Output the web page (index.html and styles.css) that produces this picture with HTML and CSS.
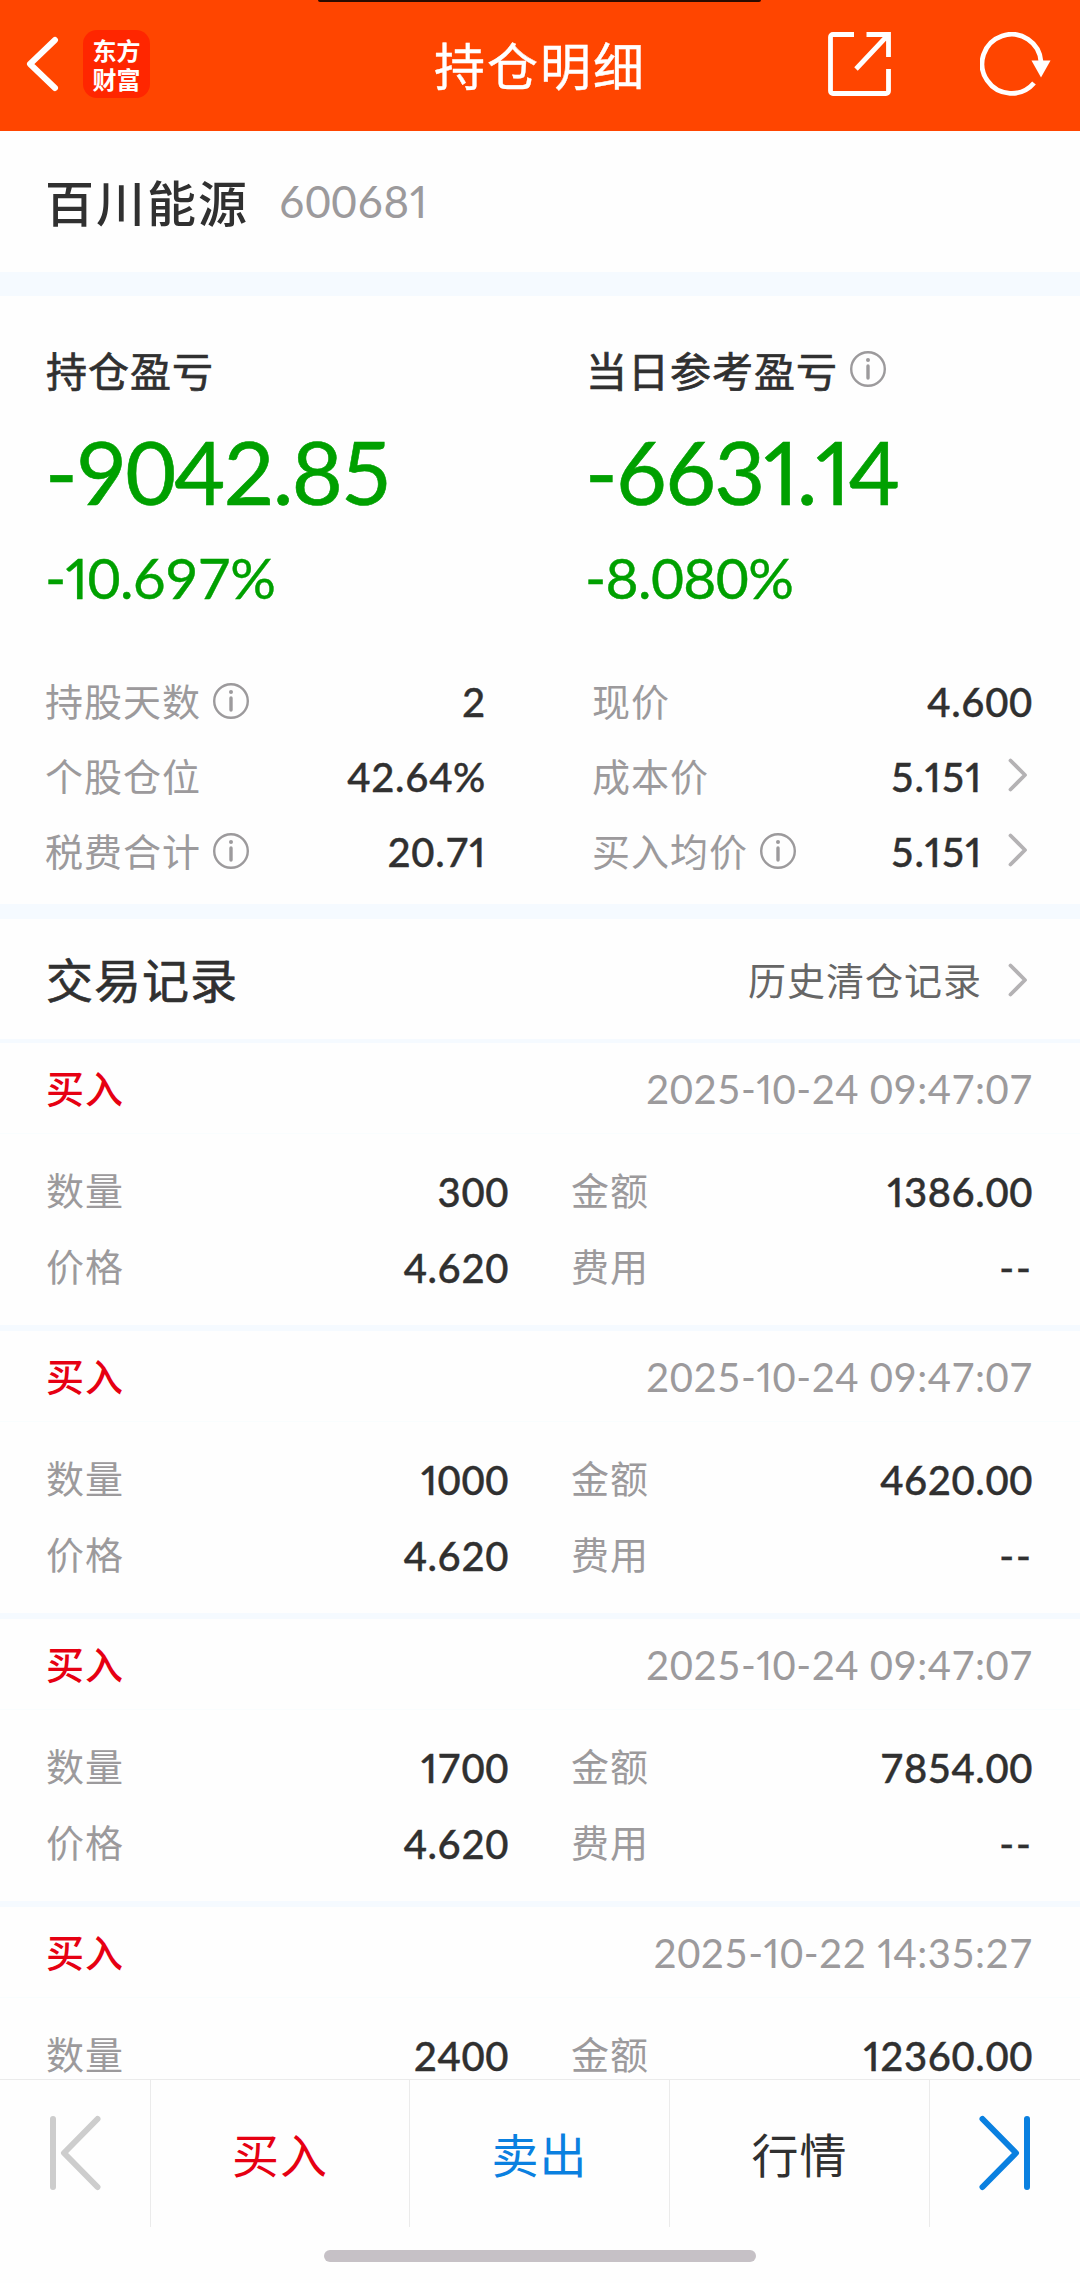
FILE: index.html
```html
<!DOCTYPE html>
<html lang="zh-CN">
<head>
<meta charset="utf-8">
<title>持仓明细</title>
<link rel="stylesheet" href="styles.css">
</head>
<body>
<svg width="0" height="0" class="defs" aria-hidden="true">
  <symbol id="info" viewBox="0 0 36 36"><circle cx="18" cy="18" r="16.8" fill="none" stroke="#9c9a9c" stroke-width="2.4"/><circle cx="18" cy="9" r="2" fill="#9c9a9c"/><path d="M18 15v12" stroke="#9c9a9c" stroke-width="3.4" stroke-linecap="round"/></symbol>
  <symbol id="chevron" viewBox="0 0 20 34"><path d="M2.500 2.500 17 17 2.500 31.500" fill="none" stroke="#b4b2b4" stroke-width="3.800" stroke-linecap="round" stroke-linejoin="round"/></symbol>
</svg>
<div class="screen">
  <header class="topbar">
    <div class="cutout"></div>
    <div class="topbar-left">
      <svg class="back" viewBox="0 0 34 56"><path d="M30 4 5 28 30 52" fill="none" stroke="#fff" stroke-width="6" stroke-linecap="round" stroke-linejoin="round"/></svg>
      <div class="logo"><span>东方</span><span>财富</span></div>
    </div>
    <h1>持仓明细</h1>
    <div class="topbar-right">
      <svg class="share" viewBox="0 0 64 64"><path d="M26 2.500H5a2.500 2.500 0 0 0-2.500 2.500V59a2.500 2.500 0 0 0 2.500 2.500H58a2.500 2.500 0 0 0 2.500-2.500V37M38.500 2.500H60.500V25M60 3 28 37" fill="none" stroke="#fff" stroke-width="4.800"/></svg>
      <svg class="refresh" viewBox="0 0 74 64"><path d="M54 51A29.500 29.500 0 1 1 61 30" fill="none" stroke="#fff" stroke-width="4.800"/><path d="M51.500 28.500H70.500L61 45.500Z" fill="#fff"/></svg>
    </div>
  </header>

  <section class="stock"><h2>百川能源</h2><span class="code num">60068<i>1</i></span></section>

  <section class="summary">
    <div class="totals">
      <div class="total"><div class="total-title">持仓盈亏</div><div class="amount num">-9042.85</div><div class="rate num">-<i>1</i>0.697%</div></div>
      <div class="total"><div class="total-title">当日参考盈亏<svg class="info"><use href="#info"/></svg></div><div class="amount num">-663<i>1</i>.<i>1</i>4</div><div class="rate num">-8.080%</div></div>
    </div>
    <div class="details">
      <dl>
        <div><dt><span>持股天数</span><svg class="info"><use href="#info"/></svg></dt><dd class="num">2</dd></div>
        <div><dt><span>个股仓位</span></dt><dd class="num">42.64%</dd></div>
        <div><dt><span>税费合计</span><svg class="info"><use href="#info"/></svg></dt><dd class="num"><span>20.7<i>1</i></span></dd></div>
      </dl>
      <dl>
        <div><dt><span>现价</span></dt><dd class="num">4.600</dd></div>
        <div><dt><span>成本价</span></dt><dd class="num"><span>5.<i>1</i>5<i>1</i></span><svg class="chevron"><use href="#chevron"/></svg></dd></div>
        <div><dt><span>买入均价</span><svg class="info"><use href="#info"/></svg></dt><dd class="num"><span>5.<i>1</i>5<i>1</i></span><svg class="chevron"><use href="#chevron"/></svg></dd></div>
      </dl>
    </div>
  </section>

  <section class="records-head"><h3>交易记录</h3><a class="history">历史清仓记录<svg class="chevron"><use href="#chevron"/></svg></a></section>

  <main class="records">
    <article class="record">
      <div class="record-head"><b>买入</b><time class="num">2025-<i>1</i>0-24 09:47:07</time></div>
      <div class="grid"><span>数量</span><em class="num">300</em><span>金额</span><em class="num"><i>1</i>386.00</em><span>价格</span><em class="num">4.620</em><span>费用</span><em class="num dash">--</em></div>
    </article>
    <article class="record">
      <div class="record-head"><b>买入</b><time class="num">2025-<i>1</i>0-24 09:47:07</time></div>
      <div class="grid"><span>数量</span><em class="num"><i>1</i>000</em><span>金额</span><em class="num">4620.00</em><span>价格</span><em class="num">4.620</em><span>费用</span><em class="num dash">--</em></div>
    </article>
    <article class="record">
      <div class="record-head"><b>买入</b><time class="num">2025-<i>1</i>0-24 09:47:07</time></div>
      <div class="grid"><span>数量</span><em class="num"><i>1</i>700</em><span>金额</span><em class="num">7854.00</em><span>价格</span><em class="num">4.620</em><span>费用</span><em class="num dash">--</em></div>
    </article>
    <article class="record">
      <div class="record-head"><b>买入</b><time class="num">2025-<i>1</i>0-22 <i>1</i>4:35:27</time></div>
      <div class="grid"><span>数量</span><em class="num">2400</em><span>金额</span><em class="num"><i>1</i>2360.00</em></div>
    </article>
  </main>

  <footer>
    <nav>
      <a><svg class="step" viewBox="0 0 54 76"><path d="M5 4V72M49.500 4 16 38 49.500 72" fill="none" stroke="#cdcdcd" stroke-width="6" stroke-linecap="round" stroke-linejoin="round"/></svg></a>
      <a class="buy">买入</a>
      <a class="sell">卖出</a>
      <a>行情</a>
      <a><svg class="step" viewBox="0 0 54 76"><path d="M49 4V72M4.500 4 38 38 4.500 72" fill="none" stroke="#0a80e0" stroke-width="6" stroke-linecap="round" stroke-linejoin="round"/></svg></a>
    </nav>
    <div class="home"></div>
  </footer>
</div>
</body>
</html>
```
FILE: styles.css
```css
* { box-sizing: border-box; margin: 0; padding: 0; }
body { background: #fefefe; color: #303030; font-family: "Noto Sans CJK SC", sans-serif; }
svg { display: block; flex: none; }
.defs { position: absolute; }
.num { font-family: Lato, "Noto Sans CJK SC", sans-serif; font-variant-numeric: tabular-nums; white-space: nowrap; }
.num i { font-style: normal; font-variant-numeric: proportional-nums; }
.screen { width: 1080px; height: 2283px; display: flex; flex-direction: column; overflow: hidden; }
.info { width: 36px; height: 36px; margin-left: 12px; }
.chevron { width: 20px; height: 34px; margin-left: 26px; margin-right: 5px; }

.topbar { position: relative; flex: none; height: 131px; background: #ff4500; color: #fff; display: grid; grid-template-columns: 1fr auto 1fr; align-items: start; }
.cutout { position: absolute; left: 318px; top: 0; width: 443px; height: 2px; background: #2a0b00; border-radius: 0 0 12px 12px; }
.topbar-left { display: flex; align-items: center; padding-left: 25px; gap: 24px; height: 128px; }
.back { width: 34px; height: 56px; }
.logo { width: 67px; height: 68px; border-radius: 14px; background: #ff2600; display: grid; grid-template-rows: 29px 29px; align-content: center; justify-content: center; font-size: 24px; line-height: 29px; font-weight: 700; }
h1 { font-size: 51px; line-height: 74px; letter-spacing: 2px; font-weight: 400; padding-top: 27px; -webkit-text-stroke: .4px #fff; }
.topbar-right { display: flex; justify-content: flex-end; gap: 88px; padding-right: 26px; height: 128px; align-items: center; }
.share { width: 64px; height: 64px; }
.refresh { width: 74px; height: 64px; }

.stock { flex: none; height: 141px; display: flex; align-items: center; padding: 0 46px 1px 45px; gap: 31px; }
h2 { font-size: 49px; line-height: 72px; letter-spacing: 2px; font-weight: 500; }
.code { font-size: 44px; line-height: 60px; color: #9c9a9c; letter-spacing: .6px; margin-left: -1px; }

.summary { flex: none; height: 647px; border-top: 24px solid #f5faff; border-bottom: 15px solid #f5faff; }
.totals { display: grid; grid-template-columns: 540px 540px; padding-top: 43px; }
.total { padding-left: 46px; }
.total-title { display: flex; align-items: center; height: 60px; font-size: 41px; letter-spacing: 1px; font-weight: 400; -webkit-text-stroke: .7px #303030; }
.amount { font-size: 88px; line-height: 110px; margin-top: 17px; margin-left: -1px; letter-spacing: -1.8px; color: #00a000; -webkit-text-stroke: .6px #00a000; }
.rate { font-size: 57px; line-height: 70px; margin-top: 16px; margin-left: -1px; letter-spacing: -.6px; color: #00a000; -webkit-text-stroke: .4px #00a000; }
.details { display: grid; grid-template-columns: 441px 441px; column-gap: 106px; padding-left: 45px; margin-top: 51px; }
.details dl > div { display: flex; justify-content: space-between; align-items: center; height: 75px; }
dt { display: flex; align-items: center; font-size: 38px; letter-spacing: 1px; color: #9c9a9c; }
dt span { margin-top: -3px; }
dd { display: flex; align-items: center; font-size: 40px; font-weight: 500; letter-spacing: .7px; padding-top: 3px; -webkit-text-stroke: .4px #303030; }
dd .chevron { margin-top: -4px; }

.records-head { flex: none; height: 124px; border-bottom: 4px solid #f5faff; display: flex; justify-content: space-between; align-items: center; padding: 0 47px 4px 46px; }
h3 { font-size: 47px; letter-spacing: 1px; font-weight: 400; -webkit-text-stroke: .6px #303030; }
.history { display: flex; align-items: center; font-size: 38px; letter-spacing: 1px; color: #666; margin-top: 3px; }
.history .chevron { margin-left: 26px; margin-top: 3px; }
.records { flex: 1; min-height: 0; overflow: hidden; }
.record { height: 288px; border-bottom: 6px solid #f5faff; }
.record-head { height: 91px; border-bottom: 1px solid #f9fdfe; display: flex; justify-content: space-between; align-items: center; padding: 1px 47px 0 46px; }
.record-head b { font-size: 38px; letter-spacing: 1px; font-weight: 500; color: #e60012; margin-top: -4px; }
time { font-size: 40px; color: #9c9a9c; letter-spacing: .5px; }
.grid { display: grid; grid-template-columns: 100px 363px 100px 361px; grid-auto-rows: 76px; align-items: center; padding: 19px 0 0 46px; }
.grid span { font-size: 38px; line-height: 50px; letter-spacing: 1px; color: #9c9a9c; margin-top: -4px; }
.grid span:nth-of-type(even) { margin-left: 62px; white-space: nowrap; }
.grid em { font-style: normal; font-size: 40px; font-weight: 500; letter-spacing: .6px; text-align: right; padding-top: 1px; -webkit-text-stroke: .4px #303030; }
.grid em:nth-of-type(even) { margin-right: -63px; }
.grid .dash { letter-spacing: 2px; }

footer { flex: none; height: 204px; border-top: 1px solid #ebebeb; }
nav { display: grid; grid-template-columns: 151px 259px 260px 260px 150px; height: 147px; }
nav a { display: flex; align-items: center; justify-content: center; font-size: 47px; letter-spacing: 1px; padding-bottom: 2px; border-right: 1px solid #ebebeb; }
nav a:last-child { border-right: 0; }
nav .buy { color: #e60012; }
nav .sell { color: #0a80e0; }
.step { width: 54px; height: 76px; }
.home { width: 432px; height: 12px; border-radius: 6px; background: #c6c1c6; margin: 23px auto 0; }
```
